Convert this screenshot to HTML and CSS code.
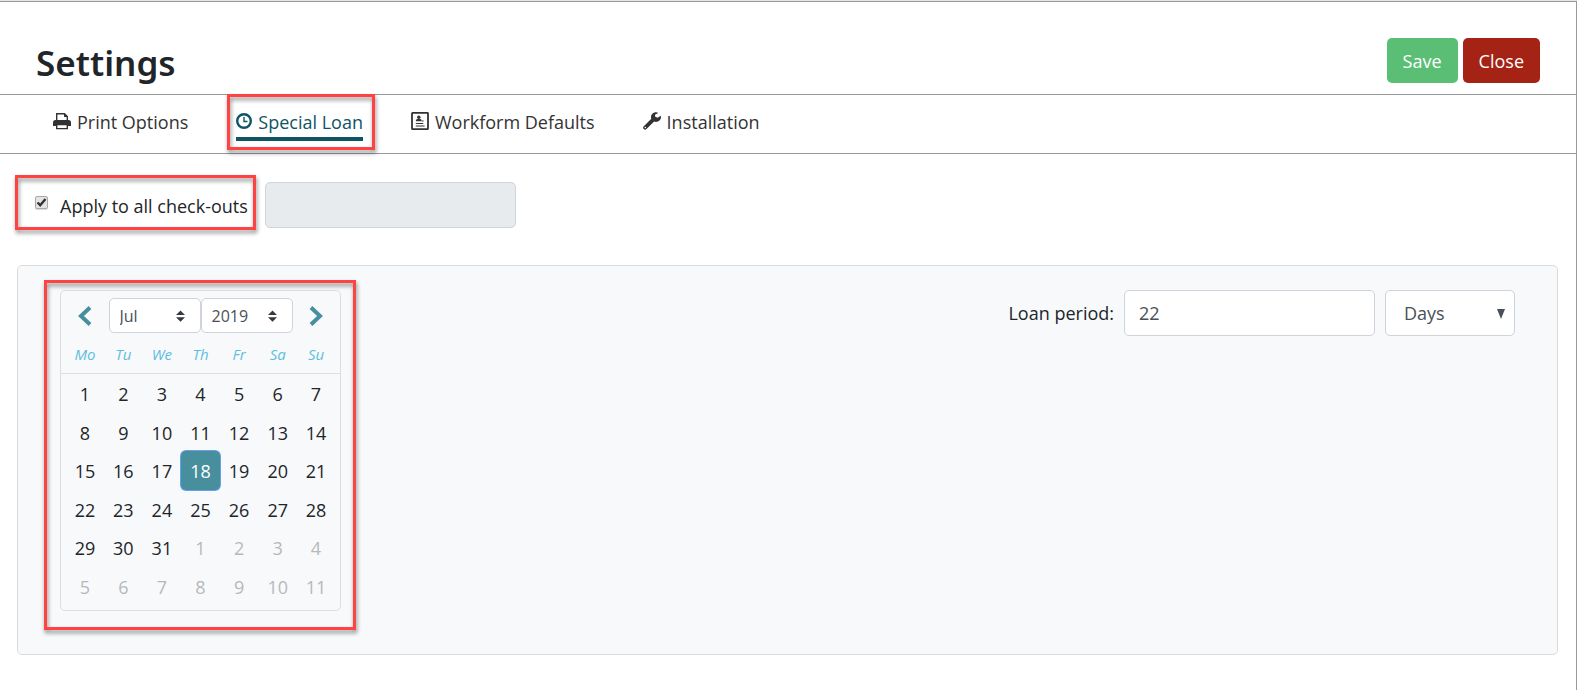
FILE: index.html
```html
<!DOCTYPE html>
<html lang="en">
<head>
    <meta charset="UTF-8">
    <meta name="viewport" content="width=device-width, initial-scale=1.0">
    <title>Settings</title>
    <link rel="stylesheet" href="styles.css">
</head>
<body>
<div class="page">
    <header class="header">
        <h1>Settings</h1>
        <div class="actions">
            <button type="button" class="btn btn-save">Save</button>
            <button type="button" class="btn btn-close">Close</button>
        </div>
    </header>

    <nav class="tabs">
        <a href="#print" class="tab">
            <svg class="icon" viewBox="0 0 18 18" aria-hidden="true">
                <path d="M3.700 8V1.700h7.800L14.300 4.500V8" fill="#fff" stroke="currentColor" stroke-width="1.4"/>
                <path d="M11 1v4h4z" fill="currentColor"/>
                <path d="M2.500 8h13A2.500 2.500 0 0 1 18 10.500V14H0v-3.500A2.500 2.500 0 0 1 2.500 8z" fill="currentColor"/>
                <path d="M3.700 12.600h10.600v4H3.700z" fill="#fff" stroke="currentColor" stroke-width="1.400"/>
            </svg>
            <span>Print Options</span>
        </a>
        <a href="#loan" class="tab active highlight">
            <svg class="icon icon-clock" viewBox="0 0 16 18" aria-hidden="true">
                <circle cx="8" cy="9" r="6.800" fill="none" stroke="currentColor" stroke-width="2.400"/>
                <path d="M8 5v4.500h3.500" fill="none" stroke="currentColor" stroke-width="1.400"/>
            </svg>
            <span>Special Loan</span>
        </a>
        <a href="#workform" class="tab">
            <svg class="icon" viewBox="0 0 18 18" aria-hidden="true">
                <rect x="1" y="0.800" width="16" height="16.400" rx="0.800" fill="none" stroke="currentColor" stroke-width="1.800"/>
                <circle cx="7.800" cy="5.200" r="1.700" fill="currentColor"/>
                <path d="M4.800 9.200c0-1.700 1.200-2.400 3-2.400s3 .7 3 2.400z" fill="currentColor"/>
                <path d="M4.800 11.500h7.500M4.800 14h8.800M11 9h1.600" stroke="currentColor" stroke-width="1.100"/>
            </svg>
            <span>Workform Defaults</span>
        </a>
        <a href="#installation" class="tab">
            <svg class="icon" viewBox="0 0 18 18" aria-hidden="true">
                <path d="M17.800 3.800 14.500 5.700 12 4.400V2.800L15.200.9C14.600.4 13.800.2 13 .2 10.200.2 8 2.400 8 5c0 .6.1 1.200.3 1.700L.8 14.200a1.900 1.900 0 0 0 0 2.800 1.900 1.900 0 0 0 2.700 0l7.600-7.500c.6.2 1.200.4 1.900.4 2.700 0 5-2.200 5-4.900 0-.4-.1-.8-.2-1.200zM2.300 16.300a.8.8 0 1 1 0-1.600.8.8 0 0 1 0 1.600z" fill="currentColor"/>
            </svg>
            <span>Installation</span>
        </a>
    </nav>

    <main class="content">
        <div class="apply-row">
            <label class="apply highlight">
                <input type="checkbox" checked>
                <span>Apply to all check-outs</span>
            </label>
            <input type="text" class="field" aria-label="Loan until" disabled>
        </div>

        <section class="panel">
            <div class="calendar highlight">
                <div class="calendar-nav">
                    <button type="button" class="arrow" aria-label="Previous month">
                        <svg viewBox="0 0 14 20" aria-hidden="true"><path d="M12 1.500 3 10l9 8.500" fill="none" stroke="currentColor" stroke-width="4"/></svg>
                    </button>
                    <select class="select-sm" aria-label="Select month"><option>Jul</option></select>
                    <select class="select-sm" aria-label="Select year"><option>2019</option></select>
                    <button type="button" class="arrow" aria-label="Next month">
                        <svg viewBox="0 0 14 20" aria-hidden="true"><path d="m2 1.500 9 8.500-9 8.500" fill="none" stroke="currentColor" stroke-width="4"/></svg>
                    </button>
                </div>
                <table class="days">
                    <thead>
                        <tr><th>Mo</th><th>Tu</th><th>We</th><th>Th</th><th>Fr</th><th>Sa</th><th>Su</th></tr>
                    </thead>
                    <tbody>
                        <tr><td>1</td><td>2</td><td>3</td><td>4</td><td>5</td><td>6</td><td>7</td></tr>
                        <tr><td>8</td><td>9</td><td>10</td><td>11</td><td>12</td><td>13</td><td>14</td></tr>
                        <tr><td>15</td><td>16</td><td>17</td><td class="selected">18</td><td>19</td><td>20</td><td>21</td></tr>
                        <tr><td>22</td><td>23</td><td>24</td><td>25</td><td>26</td><td>27</td><td>28</td></tr>
                        <tr><td>29</td><td>30</td><td>31</td><td class="muted">1</td><td class="muted">2</td><td class="muted">3</td><td class="muted">4</td></tr>
                        <tr><td class="muted">5</td><td class="muted">6</td><td class="muted">7</td><td class="muted">8</td><td class="muted">9</td><td class="muted">10</td><td class="muted">11</td></tr>
                    </tbody>
                </table>
            </div>

            <div class="period">
                <label for="period">Loan period:</label>
                <input type="text" id="period" class="field" value="22">
                <select class="unit" aria-label="Loan period unit"><option>Days</option></select>
            </div>
        </section>
    </main>
</div>
</body>
</html>
```
FILE: styles.css
```css
:root {
    --text: #212529;
    --field-text: #495057;
    --line: #999;
    --border: #ced4da;
    --teal: #0f5465;
    --calendar-teal: #488f9e;
    --highlight: #ff4343;
}

* {
    box-sizing: border-box;
}

body {
    display: flex;
    flex-direction: column;
    min-height: 100vh;
    margin: 0;
    border-top: 1px solid #e5e5e5;
    font-family: "Open Sans", "Noto Sans", sans-serif;
    font-size: 18px;
    line-height: 28px;
    color: var(--text);
    background: #fff;
}

button, input, select {
    font: inherit;
}

.page {
    flex: 1;
    border-top: 1px solid var(--line);
    border-right: 1px solid var(--line);
}

/* Header */
.header {
    display: flex;
    justify-content: space-between;
    padding: 36px 36px 11px;
    border-bottom: 1px solid var(--line);
}

.header h1 {
    height: 45px;
    margin: 0;
    font-family: "Noto Sans", sans-serif;
    font-size: 35px;
    font-weight: 600;
    line-height: 50px;
}

.actions {
    display: flex;
    gap: 5px;
}

.btn {
    height: 45px;
    padding: 0 16px;
    border: 0;
    border-radius: 5px;
    color: #fff;
    cursor: pointer;
}

.btn-save {
    background: #5abf74;
}

.btn-close {
    background: #a52314;
}

/* Tabs */
.tabs {
    display: flex;
    gap: 48px;
    padding: 14px 53px 12px;
    border-bottom: 1px solid var(--line);
}

.tab {
    display: flex;
    gap: 6px;
    height: 32px;
    border-bottom: 4px solid transparent;
    line-height: 26px;
    color: #333;
    text-decoration: none;
}

.tab.active {
    color: var(--teal);
    border-color: var(--teal);
}

.icon {
    width: 18px;
    height: 18px;
    margin-top: 3px;
}

.icon-clock {
    width: 16px;
}

/* Red call-out frame */
.highlight {
    position: relative;
}

.highlight::after {
    content: '';
    position: absolute;
    border: 3px solid var(--highlight);
    filter: drop-shadow(1px 3px 2px rgba(0, 0, 0, 0.45));
    pointer-events: none;
}

.tab.highlight::after {
    inset: -15px -12px -13px -9px;
}

/* Content */
.content {
    padding: 28px 18px 34px 17px;
}

.apply-row {
    display: flex;
    gap: 12px;
}

.apply {
    display: flex;
    gap: 12px;
    padding: 10px 5px 8px 18px;
}

.apply input {
    appearance: none;
    width: 13px;
    height: 13px;
    margin: 4px 0 0;
    border: 1px solid #a9a9a9;
    border-radius: 2px;
    background: #e4e4e4 url("data:image/svg+xml,%3Csvg xmlns='http://www.w3.org/2000/svg' viewBox='0 0 11 11'%3E%3Cpath fill='none' stroke='%23333' stroke-width='2.4' d='M1.500 5.500l2.700 2.700L9.500 2'/%3E%3C/svg%3E") no-repeat center / 11px 11px;
    box-shadow: 0 1px 1px rgba(0, 0, 0, 0.15);
}

.apply.highlight::after {
    inset: -7px -3px -2px -2px;
}

.field {
    width: 251px;
    height: 46px;
    padding: 0 14px;
    border: 1px solid var(--border);
    border-radius: 5px;
    color: var(--field-text);
    background: #fff;
}

.field:disabled {
    background: #e7ebee;
}

.panel {
    display: flex;
    justify-content: space-between;
    align-items: flex-start;
    margin-top: 37px;
    padding: 24px 42px 43px;
    border: 1px solid #d9dbde;
    border-radius: 5px;
    background: #f8f9fb;
}

.period {
    display: flex;
    align-items: center;
    gap: 10px;
}

.unit {
    width: 130px;
    height: 46px;
    padding: 0 18px;
    border: 1px solid var(--border);
    border-radius: 5px;
    appearance: none;
    color: var(--field-text);
    background: #fff url("data:image/svg+xml,%3Csvg xmlns='http://www.w3.org/2000/svg' viewBox='0 0 8 10'%3E%3Cpath fill='%23495057' d='M0 0h8L4 10z'/%3E%3C/svg%3E") no-repeat right 9px top 18px / 8px 10px;
}

/* Calendar */
.calendar {
    width: 281px;
    padding-bottom: 5px;
    border: 1px solid #dcdfe2;
    border-radius: 5px;
}

.calendar.highlight::after {
    inset: -11px -16px -20px -17px;
}

.calendar-nav {
    display: flex;
    height: 35px;
    margin-top: 7px;
}

.arrow {
    flex: 1;
    display: flex;
    align-items: center;
    justify-content: center;
    padding: 0;
    border: 0;
    color: var(--calendar-teal);
    background: none;
    cursor: pointer;
}

.arrow svg {
    width: 14px;
    height: 20px;
}

.select-sm {
    width: 92px;
    padding: 0 10px;
    border: 1px solid var(--border);
    border-radius: 5px;
    appearance: none;
    font-size: 16px;
    color: var(--field-text);
    background: #fff url("data:image/svg+xml,%3Csvg xmlns='http://www.w3.org/2000/svg' viewBox='0 0 4 5'%3E%3Cpath fill='%23343a40' d='M2 0L0 2h4zm0 5L0 3h4z'/%3E%3C/svg%3E") no-repeat right 15px center / 9px 12px;
}

.days {
    width: 100%;
    height: 272px;
    border-spacing: 0;
    table-layout: fixed;
    text-align: center;
}

.days th {
    height: 41px;
    padding: 2px 0 0;
    border-bottom: 1px solid #dcdfe2;
    color: #5bc0de;
    font-size: 15px;
    font-weight: 400;
    font-style: italic;
}

.days td {
    padding: 2px 0 0;
}

.days th:first-child,
.days td:first-child {
    width: 43px;
    padding-left: 5px;
}

.days th:last-child,
.days td:last-child {
    width: 43px;
    padding-right: 5px;
}

.days .selected {
    border-radius: 5px;
    color: #fff;
    background: var(--calendar-teal);
    box-shadow: 0 0 0 1px #6c9ef0;
}

.days .muted {
    color: #b5b9bc;
}
```
